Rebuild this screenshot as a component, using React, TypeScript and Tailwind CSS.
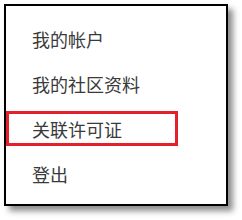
const items = [
  { label: "我的帐户", active: false },
  { label: "我的社区资料", active: false },
  { label: "关联许可证", active: true },
  { label: "登出", active: false },
];

export default function App() {
  return (
    <div className="w-[242px] h-[220px] bg-white pt-1 pl-1">
      <div className="w-[224px] h-[202px] border-2 border-black bg-white shadow-[5px_5px_6px_rgba(0,0,0,0.45)]">
        <ul className="flex flex-col gap-[10px] pt-[15px]">
          {items.map((item) => (
            <li
              key={item.label}
              className={
                item.active
                  ? "w-[172px] h-[35px] flex items-center pl-[23px] border-[3px] border-[#e3202b]"
                  : "w-[172px] h-[35px] flex items-center pl-[23px] border-[3px] border-transparent"
              }
            >
              <span className="text-[18px] leading-none text-[#3a3a3a] font-['Noto_Sans_CJK_SC',sans-serif]">
                {item.label}
              </span>
            </li>
          ))}
        </ul>
      </div>
    </div>
  );
}
